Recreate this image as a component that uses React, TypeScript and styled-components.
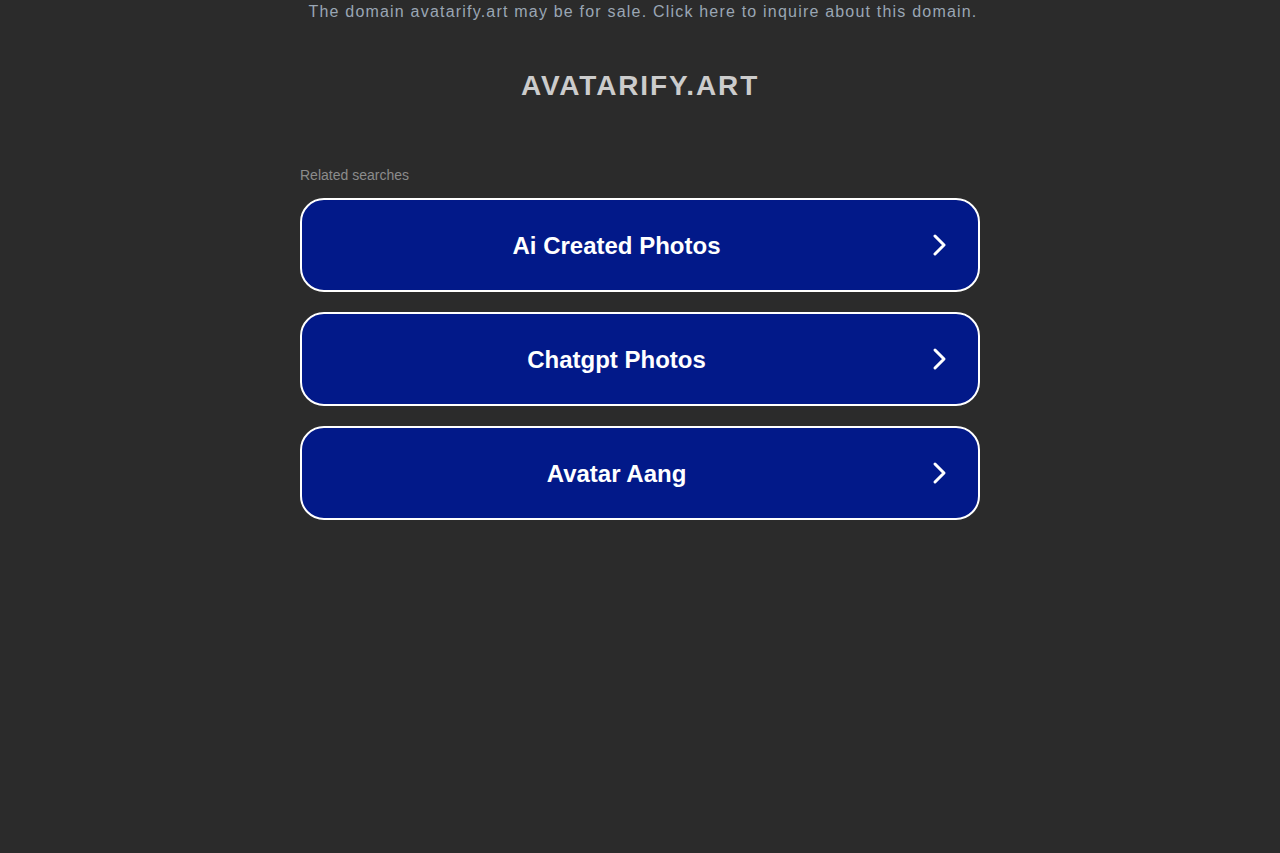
import * as React from 'react'
import styled, { createGlobalStyle } from 'styled-components'

const GlobalStyle = createGlobalStyle`
  html, body {
    margin: 0;
    padding: 0;
    background: #2b2b2b;
    font-family: 'Liberation Sans', Arial, sans-serif;
  }
`

const Page = styled.div`
  min-height: 853px;
  padding-top: 1px;
  box-sizing: border-box;
  display: flex;
  flex-direction: column;
  align-items: center;
`

const SaleNotice = styled.a`
  display: block;
  padding-left: 6px;
  font-size: 16px;
  line-height: 22px;
  letter-spacing: 1.2px;
  color: #9aa6b4;
  text-decoration: none;
  text-align: center;
`

const DomainTitle = styled.h1`
  margin: 46px 0 0;
  font-size: 28px;
  line-height: 34px;
  font-weight: 700;
  letter-spacing: 1.85px;
  color: #cccccc;
  text-align: center;
`

const Related = styled.section`
  width: 680px;
  margin-top: 63px;
  display: flex;
  flex-direction: column;
  gap: 20px;
`

const RelatedLabel = styled.div`
  font-size: 14px;
  line-height: 18px;
  color: #8c8c8c;
  margin-bottom: -6px;
`

const SearchLink = styled.a`
  box-sizing: border-box;
  height: 94px;
  display: flex;
  align-items: center;
  padding-right: 29px;
  background: #021989;
  border: 2px solid #ffffff;
  border-radius: 24px;
  color: #ffffff;
  text-decoration: none;
`

const SearchText = styled.span`
  flex: 1;
  padding-top: 2px;
  text-align: center;
  font-size: 24px;
  line-height: 30px;
  font-weight: 700;
`

const Chevron = () => (
  <svg width='18' height='24' viewBox='0 0 18 24' fill='none'>
    <polyline
      points='4,3 13,12 4,21'
      stroke='#ffffff'
      strokeWidth='3'
      strokeLinecap='round'
      strokeLinejoin='round'
    />
  </svg>
)

const searches = ['Ai Created Photos', 'Chatgpt Photos', 'Avatar Aang']

export default function App() {
  return (
    <>
      <GlobalStyle />
      <Page>
        <SaleNotice href='#'>
          The domain avatarify.art may be for sale. Click here to inquire about
          this domain.
        </SaleNotice>
        <DomainTitle>AVATARIFY.ART</DomainTitle>
        <Related>
          <RelatedLabel>Related searches</RelatedLabel>
          {searches.map((s) => (
            <SearchLink href='#' key={s}>
              <SearchText>{s}</SearchText>
              <Chevron />
            </SearchLink>
          ))}
        </Related>
      </Page>
    </>
  )
}
